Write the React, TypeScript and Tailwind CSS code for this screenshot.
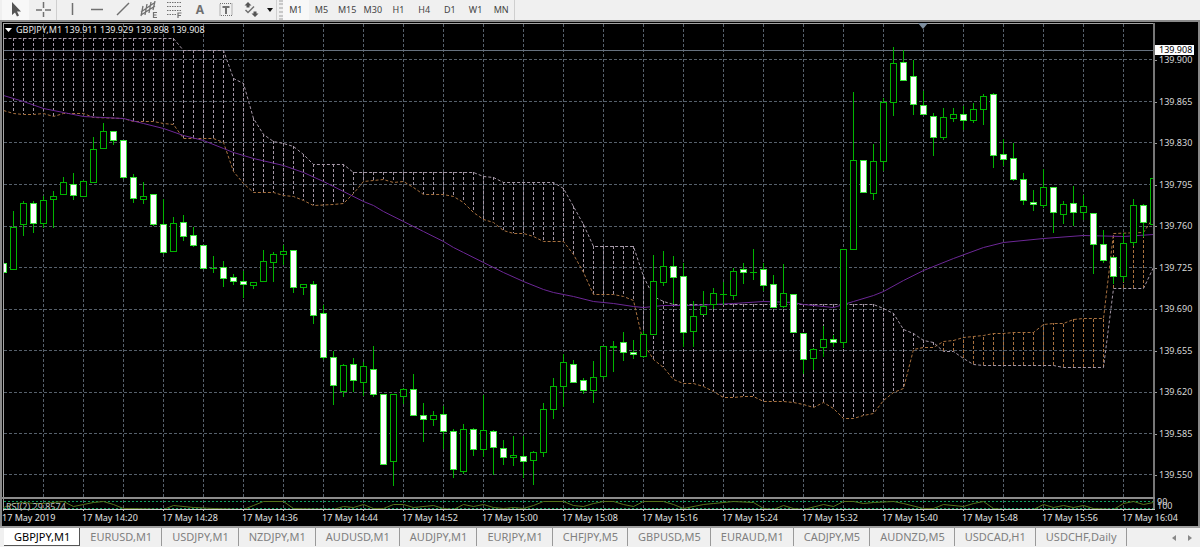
import React from "react";

type Candle = [x: number, high: number, top: number, bottom: number, low: number, down: number];
type Point = [number, number];

// x, high, body top, body bottom, low, bearish flag
const candles: Candle[] = [
  [3, 257, 263, 272, 272, 1], [13, 211, 227, 269, 269, 0], [23, 201, 203, 224, 235, 0],
  [33, 201, 203, 223, 232, 1], [43, 196, 200, 223, 227, 0], [53, 191, 196, 199, 227, 0],
  [63, 177, 182, 194, 194, 0], [73, 173, 184, 195, 199, 1], [83, 180, 181, 196, 196, 0],
  [93, 137, 149, 182, 182, 0], [103, 123, 131, 148, 148, 0], [113, 131, 131, 140, 144, 1],
  [123, 140, 140, 177, 178, 1], [133, 174, 177, 198, 202, 1], [143, 182, 196, 199, 203, 0],
  [153, 194, 194, 224, 225, 1], [163, 199, 224, 252, 253, 1], [173, 217, 223, 251, 251, 0],
  [183, 215, 222, 236, 240, 1], [193, 227, 235, 245, 246, 1], [203, 245, 245, 268, 268, 1],
  [213, 256, 268, 268, 272, 0], [223, 261, 267, 278, 286, 1], [233, 274, 277, 281, 284, 1],
  [243, 271, 281, 284, 297, 1], [253, 282, 282, 285, 288, 0], [263, 250, 261, 281, 281, 0],
  [273, 252, 254, 262, 281, 0], [283, 245, 251, 254, 264, 0], [293, 250, 250, 287, 292, 1],
  [303, 284, 284, 287, 294, 0], [313, 281, 284, 315, 323, 1], [323, 305, 313, 357, 359, 1],
  [333, 351, 357, 385, 404, 1], [343, 364, 365, 391, 396, 0], [353, 358, 364, 380, 391, 1],
  [363, 362, 366, 382, 395, 0], [373, 346, 369, 394, 396, 1], [383, 394, 394, 464, 464, 1],
  [393, 394, 394, 461, 485, 0], [403, 388, 389, 396, 403, 0], [413, 374, 389, 415, 415, 1],
  [423, 403, 415, 419, 441, 1], [433, 411, 415, 419, 425, 0], [443, 406, 414, 431, 448, 1],
  [453, 429, 431, 469, 477, 1], [463, 424, 429, 471, 473, 0], [473, 428, 429, 449, 455, 1],
  [483, 395, 430, 449, 456, 0], [493, 430, 431, 447, 474, 1], [503, 440, 448, 457, 464, 1],
  [513, 436, 455, 457, 465, 0], [523, 436, 456, 461, 477, 1], [533, 451, 452, 460, 484, 0],
  [543, 403, 409, 452, 456, 0], [553, 378, 386, 409, 418, 0], [563, 354, 362, 386, 406, 0],
  [573, 360, 364, 382, 382, 1], [583, 378, 380, 390, 393, 1], [593, 361, 377, 390, 402, 0],
  [603, 346, 346, 376, 378, 0], [613, 341, 346, 347, 371, 0], [623, 332, 342, 352, 360, 1],
  [633, 340, 352, 354, 358, 1], [643, 331, 334, 356, 357, 0], [653, 255, 281, 334, 334, 0],
  [663, 251, 266, 282, 285, 0], [673, 256, 266, 277, 303, 1], [683, 263, 276, 332, 346, 1],
  [693, 301, 316, 331, 346, 0], [703, 291, 306, 314, 314, 0], [713, 288, 293, 304, 308, 0],
  [723, 282, 294, 294, 304, 0], [733, 268, 271, 295, 299, 0], [743, 263, 269, 272, 283, 1],
  [753, 249, 272, 272, 279, 0], [763, 263, 269, 285, 290, 1], [773, 275, 284, 307, 307, 1],
  [783, 264, 293, 306, 307, 0], [793, 294, 294, 332, 332, 1], [803, 333, 333, 359, 373, 1],
  [813, 348, 349, 358, 369, 0], [823, 326, 339, 347, 356, 0], [833, 335, 339, 342, 346, 1],
  [843, 249, 249, 342, 347, 0], [853, 92, 160, 249, 249, 0], [863, 160, 160, 192, 192, 1],
  [873, 144, 161, 193, 199, 0], [883, 98, 102, 161, 170, 0], [893, 47, 63, 102, 115, 0],
  [903, 50, 62, 80, 80, 1], [913, 60, 76, 104, 114, 1], [923, 91, 105, 114, 114, 1],
  [933, 113, 116, 137, 155, 1], [943, 108, 117, 137, 139, 0], [953, 108, 114, 118, 121, 0],
  [963, 106, 114, 120, 129, 1], [973, 103, 109, 120, 122, 0], [983, 94, 96, 109, 124, 0],
  [993, 93, 94, 155, 167, 1], [1003, 139, 154, 159, 165, 1], [1013, 143, 158, 179, 180, 1],
  [1023, 173, 179, 200, 204, 1], [1033, 190, 202, 204, 210, 1], [1043, 169, 187, 205, 207, 0],
  [1053, 187, 187, 212, 232, 1], [1063, 201, 204, 214, 223, 0], [1073, 186, 203, 212, 225, 1],
  [1083, 195, 206, 212, 219, 0], [1093, 213, 213, 244, 273, 1], [1103, 230, 244, 260, 262, 1],
  [1113, 257, 257, 276, 283, 1], [1123, 233, 243, 276, 281, 0], [1133, 199, 205, 242, 245, 0],
  [1143, 204, 205, 222, 236, 1], [1153, 175, 178, 224, 224, 0],
];

const spanA: Point[] = [
  [3, 38], [173, 38], [183, 50], [223, 50], [233, 78], [243, 83], [253, 118], [263, 134],
  [273, 141], [283, 143], [293, 146], [303, 154], [313, 164], [343, 164], [353, 172], [473, 172],
  [483, 176], [493, 177], [503, 182], [553, 182], [563, 188], [573, 206], [583, 224], [593, 246],
  [633, 246], [643, 276], [653, 296], [663, 301], [673, 304], [873, 304], [883, 308], [893, 313],
  [903, 329], [913, 333], [923, 340], [933, 342], [943, 351], [953, 351], [963, 358], [973, 364],
  [983, 365], [1053, 365], [1063, 367], [1103, 367], [1113, 288], [1143, 288], [1153, 267],
];

const spanB: Point[] = [
  [3, 110], [13, 113], [23, 114], [33, 114], [43, 113], [53, 116], [63, 113], [83, 113],
  [93, 117], [123, 118], [133, 121], [153, 121], [163, 123], [173, 124], [183, 138], [213, 138],
  [223, 142], [233, 171], [243, 183], [253, 192], [273, 192], [283, 195], [293, 196], [303, 200],
  [313, 205], [333, 204], [343, 203], [353, 193], [363, 181], [373, 180], [383, 179], [393, 182],
  [403, 181], [413, 187], [423, 194], [443, 194], [453, 196], [463, 202], [473, 212], [483, 219],
  [493, 222], [503, 230], [513, 233], [523, 233], [533, 236], [543, 241], [563, 241], [573, 254],
  [583, 272], [593, 294], [613, 294], [623, 296], [633, 300], [643, 343], [653, 359], [663, 367],
  [673, 379], [683, 383], [693, 383], [703, 386], [713, 391], [723, 397], [733, 397], [743, 396],
  [753, 396], [763, 401], [783, 401], [793, 402], [803, 404], [813, 407], [823, 402], [833, 408],
  [843, 418], [853, 418], [863, 415], [873, 413], [883, 400], [893, 392], [903, 388], [913, 349],
  [923, 347], [933, 347], [943, 341], [953, 340], [963, 337], [983, 335], [993, 333], [1003, 333],
  [1013, 332], [1033, 332], [1043, 324], [1053, 323], [1063, 323], [1073, 319], [1083, 318],
  [1103, 318], [1113, 233], [1143, 232], [1153, 217],
];

const movingAverage: Point[] = [
  [3, 95], [13, 98], [23, 101], [43, 108], [63, 112], [83, 116], [103, 117], [123, 118],
  [143, 123], [163, 128], [183, 135], [203, 140], [223, 148], [233, 152], [253, 158], [283, 165],
  [303, 172], [323, 181], [343, 191], [363, 201], [373, 205], [383, 211], [403, 221], [423, 231],
  [443, 241], [453, 247], [463, 252], [483, 262], [503, 272], [523, 281], [543, 289], [553, 292],
  [573, 296], [593, 301], [613, 303], [633, 306], [643, 307], [653, 306], [663, 305], [693, 305],
  [733, 303], [763, 301], [793, 302], [803, 304], [833, 307], [843, 304], [853, 301], [873, 295],
  [883, 291], [903, 280], [923, 270], [953, 258], [983, 247], [1003, 242], [1043, 238], [1083, 235],
  [1123, 236], [1153, 234],
];

const rsi: Point[] = [
  [3, 507], [13, 503], [23, 502], [33, 503], [43, 503], [63, 501], [73, 506], [83, 504],
  [93, 502], [103, 501], [113, 504], [123, 508], [133, 508], [163, 509], [173, 505], [193, 507],
  [213, 508], [243, 509], [253, 505], [263, 501], [283, 501], [293, 508], [333, 509], [343, 506],
  [353, 507], [363, 504], [373, 508], [383, 508], [393, 504], [403, 504], [413, 507], [433, 505],
  [443, 508], [453, 509], [463, 504], [473, 506], [483, 504], [493, 507], [503, 508], [513, 507],
  [523, 508], [533, 505], [543, 501], [563, 501], [573, 505], [583, 506], [593, 503], [603, 501],
  [613, 501], [623, 504], [633, 506], [643, 501], [663, 501], [673, 504], [683, 508], [703, 504],
  [713, 503], [733, 501], [753, 502], [763, 508], [773, 509], [783, 505], [793, 508], [803, 509],
  [823, 504], [833, 506], [843, 501], [853, 501], [863, 503], [873, 502], [893, 501], [903, 503],
  [923, 508], [933, 508], [943, 504], [963, 506], [973, 503], [983, 501], [993, 508], [1003, 509],
  [1033, 509], [1043, 504], [1053, 507], [1063, 505], [1073, 507], [1083, 505], [1093, 508],
  [1113, 509], [1123, 503], [1133, 501], [1143, 504], [1153, 502],
];

const gridRows = [59, 101, 142, 184, 226, 267, 309, 350, 392, 433, 474];
const gridCols = Array.from({ length: 28 }, (_, i) => 43 + i * 40);

const prices = [
  "139.900", "139.865", "139.830", "139.795", "139.760", "139.725",
  "139.690", "139.655", "139.620", "139.585", "139.550",
];

const times = [
  "17 May 2019", "17 May 14:20", "17 May 14:28", "17 May 14:36", "17 May 14:44",
  "17 May 14:52", "17 May 15:00", "17 May 15:08", "17 May 15:16", "17 May 15:24",
  "17 May 15:32", "17 May 15:40", "17 May 15:48", "17 May 15:56", "17 May 16:04",
];

const timeframes = ["M1", "M5", "M15", "M30", "H1", "H4", "D1", "W1", "MN"];

const symbols = [
  "GBPJPY,M1", "EURUSD,M1", "USDJPY,M1", "NZDJPY,M1", "AUDUSD,M1", "AUDJPY,M1", "EURJPY,M1",
  "CHFJPY,M5", "GBPUSD,M5", "EURAUD,M1", "CADJPY,M5", "AUDNZD,M5", "USDCAD,H1", "USDCHF,Daily",
];

const toPoints = (points: Point[]) => points.map(([x, y]) => `${x + 0.5},${y + 0.5}`).join(" ");

const valueAt = (points: Point[], x: number) => {
  const i = points.findIndex(([px]) => px >= x);
  const [x1, y1] = points[i];
  if (x1 === x || i === 0) return y1;
  const [x0, y0] = points[i - 1];
  return y0 + ((y1 - y0) * (x - x0)) / (x1 - x0);
};

const Chart = () => (
  <svg viewBox="2 22 1153 489" className="block w-full h-auto" fill="none" role="img" aria-label="GBPJPY M1 chart">
    <g shapeRendering="crispEdges">
      <g stroke="#56606b" strokeDasharray="3 2">
        {gridRows.map((y) => (
          <path key={y} d={`M4 ${y}.5H1153`} />
        ))}
        {gridCols.map((x) => (
          <path key={x} d={`M${x}.5 24V497M${x}.5 500V509`} />
        ))}
      </g>
      <path d="M4 50.5H1153" stroke="#66717f" />
      <g strokeDasharray="3 2">
        {candles.map(([x]) => {
          const a = valueAt(spanA, x);
          const b = valueAt(spanB, x);
          return <path key={x} d={`M${x + 0.5} ${a}V${b}`} stroke={a < b ? "#a497a6" : "#a8713f"} />;
        })}
      </g>
    </g>
    <polyline points={toPoints(spanB)} stroke="#a8713f" strokeDasharray="3 2" />
    <polyline points={toPoints(spanA)} stroke="#a497a6" strokeDasharray="3 2" />
    <polyline points={toPoints(movingAverage)} stroke="#6c2796" />
    <g shapeRendering="crispEdges">
      {candles.map(([x, high, top, bottom, low, down]) => (
        <g key={x} stroke={down ? "#37e637" : "#00b400"}>
          <path d={`M${x + 0.5} ${high}V${low + 1}`} stroke="#00b400" />
          {top === bottom ? (
            <path d={`M${x - 3} ${top + 0.5}H${x + 4}`} />
          ) : (
            <rect x={x - 2.5} y={top + 0.5} width={6} height={bottom - top} fill={down ? "#fff" : "#000"} />
          )}
        </g>
      ))}
      <rect x="2" y="24" width="1" height="487" fill="#000" />
      <path d="M2 22.5H1155" stroke="#000" />
      <path d="M3.5 511V23.5H1153" stroke="#a3a3a3" />
      <rect x="1153" y="23" width="2" height="487" fill="#777" />
      <rect x="2" y="497" width="1153" height="2" fill="#8c8c8c" />
      <path d="M4 501.5H1153M4 508.5H1153" stroke="#10a060" strokeDasharray="2 2" />
    </g>
    <polyline points={toPoints(rsi)} stroke="#56721c" />
    <path d="M3 509.5H1155" stroke="#cfcfcf" />
    {gridCols.map((x) => (
      <path key={x} d={`M${x + 40}.5 509V511`} stroke="#cfcfcf" />
    ))}
    <path d="M918 23H928L923 29Z" fill="#7d8e9f" />
  </svg>
);

const ToolButton: React.FC<{ label: string; active?: boolean; children: React.ReactNode }> = ({
  label,
  active,
  children,
}) => (
  <button aria-label={label} className={`flex flex-1 items-center justify-center h-5 ${active ? "bg-[#f8f8f8]" : ""}`}>
    <svg width="18" height="18" viewBox="0 0 18 18" fill="none" stroke="#707070" strokeWidth="1.5">
      {children}
    </svg>
  </button>
);

const Grip = () => <span className="w-1 h-5 border-x-2 border-dotted border-[#c8c8c8]" />;

const Toolbar = () => (
  <div className="flex items-center h-5 bg-[#f0f0f0]">
    <div className="flex w-[54px] ml-0.5">
      <ToolButton label="Cursor" active>
        <path d="M5 1V14L8 11.5L10 15.5L12 14.5L10 10.5H14Z" fill="#555" stroke="none" />
      </ToolButton>
      <ToolButton label="Crosshair">
        <path d="M9.5 1V7M9.5 11V16M2 9H8M11 9H17" />
      </ToolButton>
    </div>
    <span className="w-px h-5 mr-0.5 bg-[#cfcfcf]" />
    <div className="flex w-[205px]">
      <ToolButton label="Vertical line">
        <path d="M9.5 2V14" />
      </ToolButton>
      <ToolButton label="Horizontal line">
        <path d="M3 8.5H15" />
      </ToolButton>
      <ToolButton label="Trendline">
        <path d="M3 14L15 2" />
      </ToolButton>
      <ToolButton label="Equidistant channel">
        <path d="M1 11L14 2M1 14L15 5M3 5L1 15M7 3L5 14M11 1L9 12M15 0L13 9" strokeWidth="1.3" />
        <path d="M17 11.5H13.5V16.5H17M13.5 14H16.5" strokeWidth="1.2" />
      </ToolButton>
      <ToolButton label="Fibonacci retracement">
        <path d="M2 1.5H16M2 5.5H16M2 9.5H16M2 13.5H11" strokeDasharray="1.5 1" strokeWidth="1.2" />
        <path d="M16.5 12H13V17M13 14.5H16" strokeWidth="1.2" />
      </ToolButton>
      <button aria-label="Text" className="flex flex-1 items-center justify-center h-5 text-xs leading-4 font-bold text-[#707070]">
        A
      </button>
      <ToolButton label="Text label">
        <rect x="3" y="2.5" width="12" height="12" strokeDasharray="1 1" strokeWidth="1" />
        <path d="M5.5 6H12.5M9 6V13" strokeWidth="2" />
      </ToolButton>
      <ToolButton label="Arrows">
        <path d="M6 1L9.5 4.5H7.5V6.5H4.5V4.5H2.5ZM13 16L16.5 12.5H14.5V10.5H11.5V12.5H9.5Z" fill="#555" stroke="none" />
        <path d="M3.5 9L6 11.5L12 5.5" />
      </ToolButton>
    </div>
    <button aria-label="More arrows" className="flex items-center justify-center w-3 h-5">
      <svg width="6" height="4" viewBox="0 0 6 4">
        <path d="M0 0H6L3 4Z" fill="#111" />
      </svg>
    </button>
    <span className="w-px h-5 mr-0.5 bg-[#cfcfcf]" />
    <Grip />
    <div className="flex w-[231px]">
      {timeframes.map((frame, i) => (
        <button key={frame} className={`flex-1 h-5 text-[9px] leading-5 text-[#444] ${i === 0 ? "bg-[#f8f8f8]" : ""}`}>
          {frame}
        </button>
      ))}
    </div>
    <span className="w-px h-5 bg-[#cfcfcf]" />
  </div>
);

const PriceAxis = () => (
  <div className="relative flex flex-col justify-between shrink-0 w-[43px] pt-[33px] pb-[31px] pl-1 text-[9px] leading-[10px] text-[#d8d8d8]">
    {prices.map((price) => (
      <span key={price} className="relative before:absolute before:-left-1 before:top-1/2 before:w-0.5 before:h-px before:bg-[#999]">
        {price}
      </span>
    ))}
    <span className="absolute top-[23px] left-0 w-[39px] h-[10px] pl-1 bg-white text-black">139.908</span>
    <span className="absolute bottom-0 left-0.5">100</span>
    <span className="absolute bottom-1 left-0.5">90</span>
  </div>
);

const SymbolTabs = () => (
  <nav className="flex h-5 pl-1 bg-[#f0f0f0] text-[11px] text-[#808080]">
    {symbols.map((symbol, i) => (
      <button
        key={symbol}
        className={`h-[18px] pl-[10px] pr-[9px] leading-[18px] border-r whitespace-nowrap ${
          i === 0 ? "bg-white text-black border-[#555] border-b" : "border-[#999]"
        }`}
      >
        {symbol}
      </button>
    ))}
    <div className="flex items-center gap-3 ml-auto mr-2">
      <button aria-label="Scroll left">
        <svg width="4" height="6" viewBox="0 0 4 6">
          <path d="M4 0V6L0 3Z" fill="#888" />
        </svg>
      </button>
      <button aria-label="Scroll right">
        <svg width="4" height="6" viewBox="0 0 4 6">
          <path d="M0 0V6L4 3Z" fill="#888" />
        </svg>
      </button>
    </div>
  </nav>
);

const App: React.FC = () => {
  return (
    <div className="w-full overflow-hidden bg-[#f0f0f0] font-['Noto_Sans',sans-serif]">
      <Toolbar />
      <div className="border-t-2 border-l-2 border-r-2 border-t-[#8a8a8a] border-x-[#8a8a8a] bg-black">
        <div className="flex">
          <div className="relative flex-1 min-w-0">
            <Chart />
            <div className="absolute top-0.5 left-[3px] flex items-center gap-1 text-[9px] leading-3 text-[#e8e8e8] whitespace-nowrap">
              <svg width="7" height="4" viewBox="0 0 7 4">
                <path d="M0 0H7L3.5 4Z" fill="#fff" />
              </svg>
              <span>GBPJPY,M1 139.911 139.929 139.898 139.908</span>
            </div>
            <div className="absolute bottom-0 left-1 text-[9px] leading-2 text-[#bbb] whitespace-nowrap">RSI(2) 29.8574</div>
          </div>
          <PriceAxis />
        </div>
        <div className="flex h-[15px] pt-px text-[9px] leading-3 text-[#e0e0e0] whitespace-nowrap">
          {times.map((time, i) => (
            <span key={time} className={i === times.length - 1 ? "w-[76px]" : "flex-1"}>
              {time}
            </span>
          ))}
        </div>
      </div>
      <div className="h-0.5 bg-[#a0a0a0]" />
      <SymbolTabs />
    </div>
  );
};

export default App;
